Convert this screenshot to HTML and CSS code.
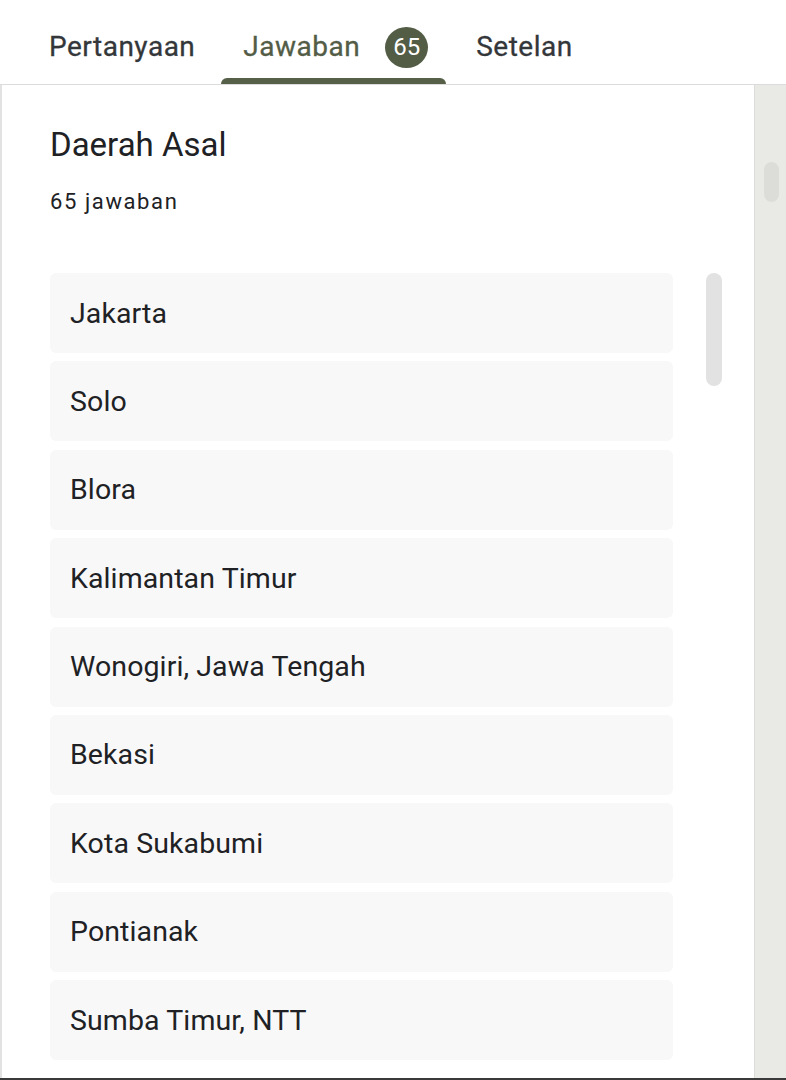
FILE: index.html
```html
<!DOCTYPE html>
<html lang="id">
<head>
<meta charset="utf-8">
<title>Jawaban</title>
<link rel="stylesheet" href="styles.css">
</head>
<body>
<div class="page">
  <header class="tabs">
    <div class="tab">Pertanyaan</div>
    <div class="tab active">Jawaban <span class="badge">65</span></div>
    <div class="tab last">Setelan</div>
  </header>
  <main class="main">
    <section class="card">
      <h1 class="title">Daerah Asal</h1>
      <p class="count">65 jawaban</p>
      <ul class="answers">
        <li class="answer">Jakarta</li>
        <li class="answer">Solo</li>
        <li class="answer">Blora</li>
        <li class="answer">Kalimantan Timur</li>
        <li class="answer">Wonogiri, Jawa Tengah</li>
        <li class="answer">Bekasi</li>
        <li class="answer">Kota Sukabumi</li>
        <li class="answer">Pontianak</li>
        <li class="answer">Sumba Timur, NTT</li>
      </ul>
      <div class="inner-thumb"></div>
    </section>
    <aside class="rail"><div class="rail-thumb"></div></aside>
  </main>
</div>
</body>
</html>
```

FILE: styles.css
```css
* { box-sizing: border-box; }
html, body { margin: 0; padding: 0; background: #fff; }
body { font-family: Roboto, "Noto Sans", Arial, sans-serif; color: #202124; }

.page {
  width: 786px;
  height: 1080px;
  display: flex;
  flex-direction: column;
  border-bottom: 2px solid #3a3a3a;
  overflow: hidden;
}

.tabs {
  height: 85px;
  flex: none;
  display: flex;
  gap: 4px;
  padding-left: 27px;
  border-bottom: 1px solid #dcdcdc;
}
.tab {
  position: relative;
  display: flex;
  align-items: center;
  height: 84px;
  padding: 29px 22px 19px;
  align-self: flex-start;
  font-size: 28px;
  line-height: 36px;
  font-weight: 400;
  color: #34373a;
  letter-spacing: 0.5px;
  -webkit-text-stroke: 0.3px currentColor;
}
.tab.last { margin-left: 4px; }
.tab.active { color: #535c47; padding-right: 18px; }
.tab.active::after {
  content: "";
  position: absolute;
  left: 0;
  right: 0;
  bottom: 0;
  height: 6px;
  background: #566049;
  border-radius: 6px 6px 0 0;
}
.badge {
  display: inline-flex;
  align-items: center;
  justify-content: center;
  width: 43px;
  height: 41px;
  margin-left: 25px;
  border-radius: 50%;
  background: #535c45;
  color: #fff;
  font-size: 24px;
  font-weight: 400;
  letter-spacing: 0;
  -webkit-text-stroke: 0;
}

.main {
  flex: 1;
  display: flex;
  min-height: 0;
}
.card {
  position: relative;
  flex: 1;
  background: #fff;
  border-left: 2px solid #e2e2e2;
  border-top-right-radius: 12px;
  padding: 40px 81px 0 48px;
}
.title {
  margin: 0;
  font-size: 33px;
  line-height: 40px;
  font-weight: 400;
  color: #202124;
}
.count {
  margin: 23px 0 0;
  font-size: 22px;
  line-height: 28px;
  letter-spacing: 1.6px;
  color: #202124;
}
.answers {
  list-style: none;
  margin: 57px 0 0;
  padding: 0;
  display: flex;
  flex-direction: column;
  gap: 8.4px;
}
.answer {
  height: 80px;
  display: flex;
  align-items: center;
  padding-left: 20px;
  background: #f8f8f8;
  border-radius: 6px;
  font-size: 28.5px;
  letter-spacing: 0.1px;
  color: #202124;
}
.inner-thumb {
  position: absolute;
  left: 704px;
  top: 188px;
  width: 16px;
  height: 113px;
  border-radius: 8px;
  background: #e2e2e2;
}

.rail {
  position: relative;
  width: 32px;
  flex: none;
  background: #e9eae6;
  border-left: 1px solid #dcddd9;
}
.rail-thumb {
  position: absolute;
  left: 9px;
  top: 77px;
  width: 15px;
  height: 40px;
  border-radius: 8px;
  background: #dcddd9;
}
```
